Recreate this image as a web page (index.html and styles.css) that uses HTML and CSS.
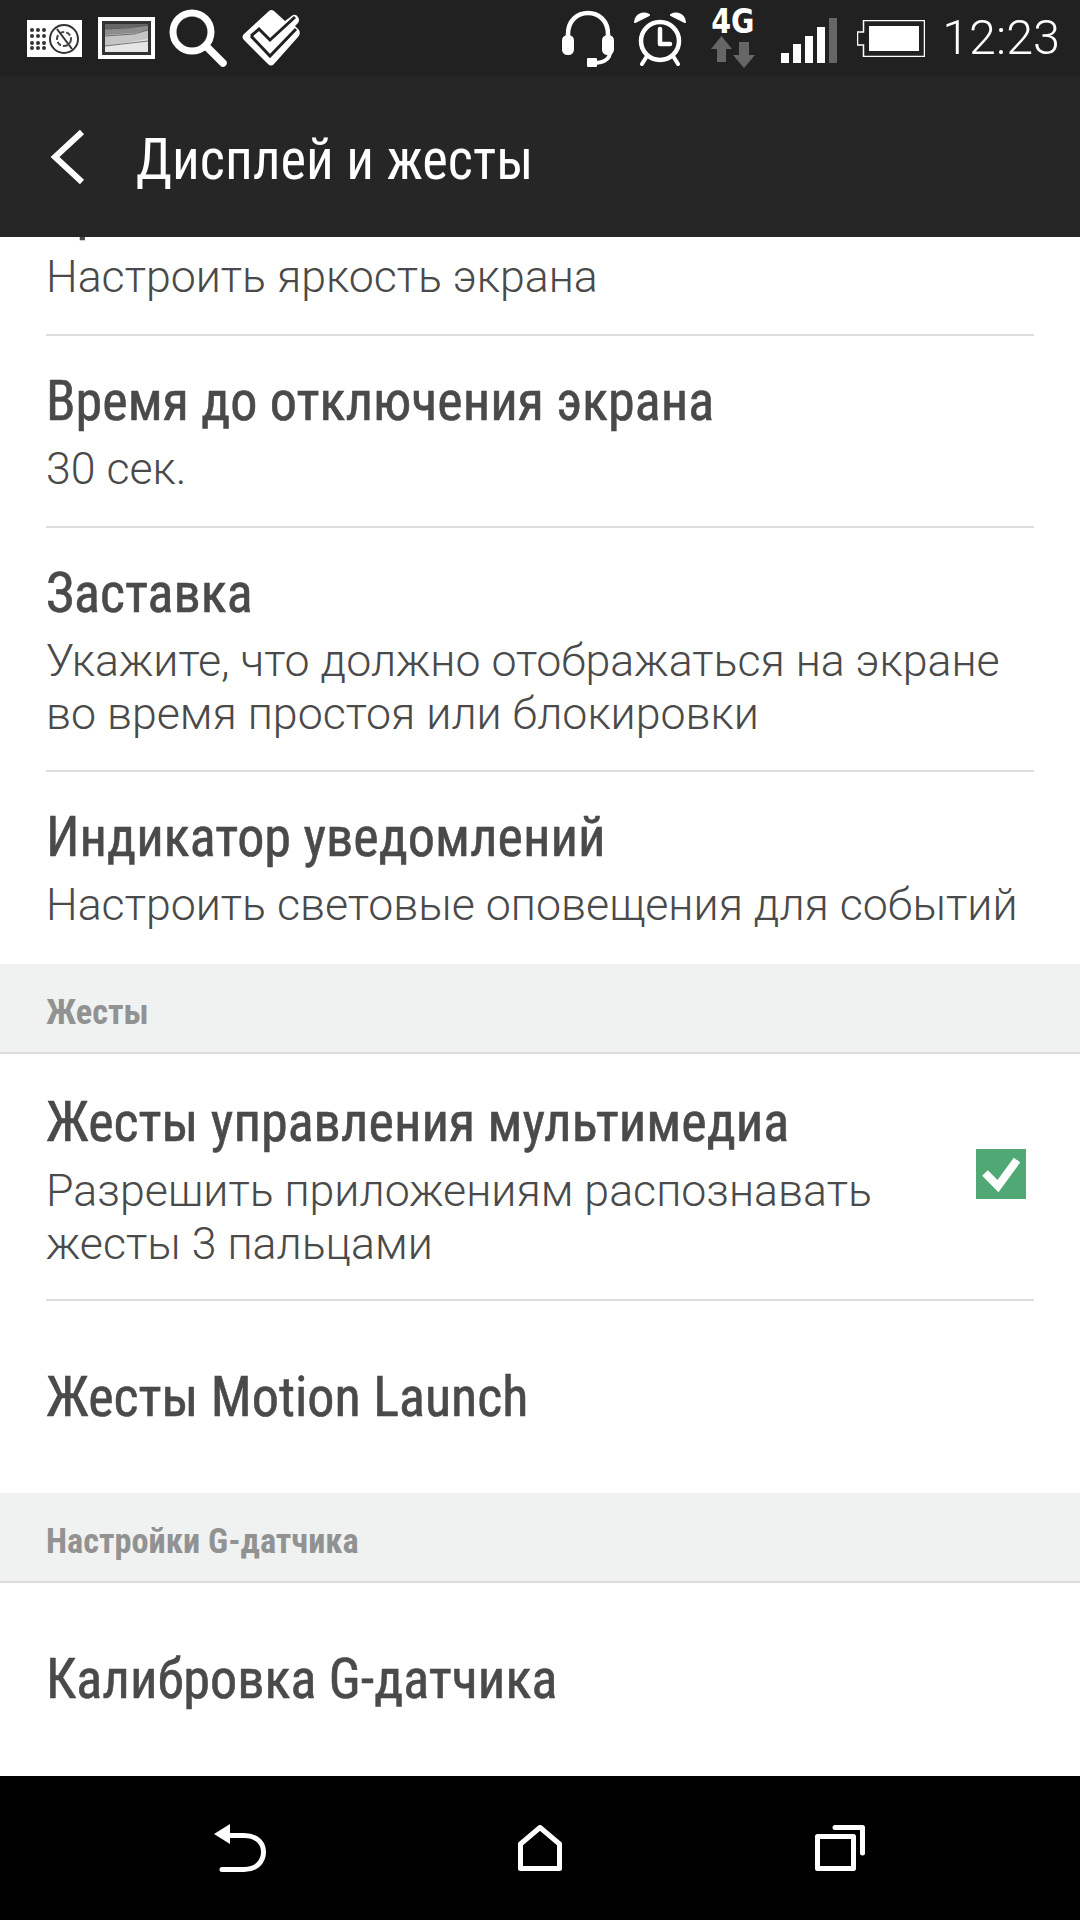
FILE: index.html
```html
<!DOCTYPE html>
<html lang="ru">
<head>
<meta charset="utf-8">
<title>Дисплей и жесты</title>
<link rel="stylesheet" href="styles.css">
</head>
<body>
<div class="phone">
  <header class="status">
    <div class="status-group left">
      <svg class="i-compass" viewBox="0 0 55 37"><rect width="55" height="37" fill="#fff"/><g fill="#333"><circle cx="5" cy="10" r="2"/><circle cx="11" cy="10" r="2"/><circle cx="17" cy="10" r="2"/><circle cx="5" cy="16" r="2"/><circle cx="11" cy="16" r="2"/><circle cx="17" cy="16" r="2"/><circle cx="5" cy="23" r="2"/><circle cx="11" cy="23" r="2"/><circle cx="17" cy="23" r="2"/><circle cx="5" cy="28" r="2"/><circle cx="11" cy="28" r="2"/><circle cx="17" cy="28" r="2"/></g><circle cx="37" cy="19" r="14" fill="none" stroke="#333" stroke-width="2"/><circle cx="37" cy="19" r="7" fill="none" stroke="#444" stroke-width="2" stroke-dasharray="5 2"/><path d="M30 9L45 29" stroke="#333" stroke-width="2"/></svg>
      <svg class="i-photo" viewBox="0 0 57 42"><rect width="57" height="42" fill="#fff"/><rect x="4" y="4" width="49" height="34" fill="#333"/><rect x="7" y="7" width="43" height="28" fill="#e6e6e6"/><path d="M7 7H50V22L7 29Z" fill="#c4c4c4"/><path d="M7 7H50V13L36 16L7 18Z" fill="#8c8c8c"/><path d="M7 7H50V9L7 12Z" fill="#666"/><path d="M7 29L50 24M7 19L36 17L50 13M7 12L30 11L50 8" fill="none" stroke="#555" stroke-width=".8"/></svg>
      <svg class="i-search" viewBox="0 0 58 58"><circle cx="23" cy="23" r="19" fill="none" stroke="#fff" stroke-width="7"/><path d="M37 37L54 54" stroke="#fff" stroke-width="7.5" stroke-linecap="round"/></svg>
      <svg class="i-check" viewBox="0 0 60 58"><path d="M3 25L28 2Q30 0 33 2L44 12L52 6Q55 5 57 8Q59 11 57 14L54 17L58 21Q60 25 57 28L33 55Q30 58 27 55L3 31Q0 28 3 25Z" fill="#fff"/><path d="M10 27L29 47L55 20" fill="none" stroke="#212121" stroke-width="3"/><path d="M10 27L18 20L29 31L54 8" fill="none" stroke="#212121" stroke-width="3"/></svg>
    </div>
    <div class="status-group right">
      <svg class="i-headset" viewBox="0 0 52 57"><path d="M6 28V24C6 11 15 3 26 3S46 11 46 24V28" fill="none" stroke="#fff" stroke-width="4.5"/><rect x="0" y="25" width="12" height="20" rx="5.500" fill="#fff"/><rect x="40" y="25" width="12" height="20" rx="5.500" fill="#fff"/><path d="M48 42C48 50 40 53 31 53" fill="none" stroke="#fff" stroke-width="4"/><rect x="25" y="48" width="10" height="9" rx="1" fill="#fff"/></svg>
      <svg class="i-alarm" viewBox="0 0 54 56"><circle cx="27" cy="31" r="19" fill="none" stroke="#fff" stroke-width="4.5"/><path d="M2 12C3 4 10 2 16 5Z" fill="#fff" stroke="#fff" stroke-width="2" stroke-linejoin="round"/><path d="M52 12C51 4 44 2 38 5Z" fill="#fff" stroke="#fff" stroke-width="2" stroke-linejoin="round"/><path d="M27 19V34H37" fill="none" stroke="#fff" stroke-width="4.5" stroke-linecap="round" stroke-linejoin="round"/><path d="M14 46L9 54M40 46L45 54" stroke="#fff" stroke-width="4" stroke-linecap="round"/></svg>
      <div class="net">
        <span class="net-label">4G</span>
        <svg class="i-arrows" viewBox="0 0 44 32"><path d="M10.500 0L21 13H15V26H6V13H0Z" fill="#666"/><path d="M33 32L44 19H38V6H28V19H22Z" fill="#666"/></svg>
      </div>
      <svg class="i-signal" viewBox="0 0 56 45"><rect y="35" width="8" height="10" fill="#fff"/><rect x="12" y="26" width="8" height="19" fill="#fff"/><rect x="24" y="18" width="8" height="27" fill="#fff"/><rect x="36" y="9" width="8" height="36" fill="#fff"/><rect x="48" width="8" height="45" fill="#666"/></svg>
      <svg class="i-battery" viewBox="0 0 68 37"><path d="M6.500 12V.500H67.500V36.500H6.500V25H.500V12Z" fill="none" stroke="#fff" stroke-width="1.500"/><rect x="12" y="6" width="50" height="25" fill="#fff"/></svg>
      <span class="time">12:23</span>
    </div>
  </header>

  <div class="actionbar">
    <svg class="i-back" viewBox="0 0 36 56"><path d="M33 3L6 28L33 53" fill="none" stroke="#fff" stroke-width="6"/></svg>
    <h1 class="screen-title">Дисплей и жесты</h1>
  </div>

  <main class="list">
    <div class="row first">
      <div class="row-title">Яркость</div>
      <div class="row-sub">Настроить яркость экрана</div>
    </div>
    <div class="row">
      <div class="row-title">Время до отключения экрана</div>
      <div class="row-sub">30 сек.</div>
    </div>
    <div class="row tall">
      <div class="row-title">Заставка</div>
      <div class="row-sub">Укажите, что должно отображаться на экране<br>во время простоя или блокировки</div>
    </div>
    <div class="row last">
      <div class="row-title">Индикатор уведомлений</div>
      <div class="row-sub">Настроить световые оповещения для событий</div>
    </div>
    <div class="section">Жесты</div>
    <div class="row with-check">
      <div class="row-body">
        <div class="row-title">Жесты управления мультимедиа</div>
        <div class="row-sub">Разрешить приложениям распознавать<br>жесты 3 пальцами</div>
      </div>
      <svg class="checkbox" viewBox="0 0 50 50"><rect width="50" height="50" fill="#50a874"/><path d="M9 24L22 37L41 11" fill="none" stroke="#fff" stroke-width="8"/></svg>
    </div>
    <div class="row single last">
      <div class="row-title">Жесты Motion Launch</div>
    </div>
    <div class="section">Настройки G-датчика</div>
    <div class="row single last">
      <div class="row-title">Калибровка G-датчика</div>
    </div>
  </main>

  <nav class="navbar">
    <svg class="i-nav-back" viewBox="0 0 52 48"><path d="M0 10L16 0V20Z" fill="#fff"/><path d="M14 11.500H30C44 11.500 49.500 20 49.500 28S44 45.500 30 45.500H8" fill="none" stroke="#fff" stroke-width="5" stroke-linecap="round"/></svg>
    <svg class="i-nav-home" viewBox="0 0 44 46"><path d="M2.500 19L22 2.500L41.500 19V43.500H2.500Z" fill="none" stroke="#fff" stroke-width="5" stroke-linejoin="round"/></svg>
    <svg class="i-nav-recent" viewBox="0 0 50 46"><rect x="2.500" y="11.500" width="36" height="32" fill="none" stroke="#fff" stroke-width="5" stroke-linejoin="round"/><path d="M20 2.500H47.500V28" fill="none" stroke="#fff" stroke-width="5" stroke-linecap="round" stroke-linejoin="round"/></svg>
  </nav>
</div>
</body>
</html>
```

FILE: styles.css
```css
* { box-sizing: border-box; }
html, body { margin: 0; padding: 0; }
body { background: #fff; font-family: Roboto, "Noto Sans", sans-serif; }
.phone { width: 1080px; height: 1920px; display: flex; flex-direction: column; overflow: hidden; }

.status { height: 76px; flex: none; background: #212121; display: flex; justify-content: space-between; align-items: center; color: #fff; }
.status-group { display: flex; align-items: center; }
.left { padding-left: 27px; }
.right { padding-right: 20px; }
.i-compass { width: 55px; height: 37px; margin-right: 16px; }
.i-photo { width: 57px; height: 42px; margin-right: 14px; }
.i-search { width: 58px; height: 58px; margin-right: 14px; }
.i-check { width: 60px; height: 58px; }
.i-headset { width: 52px; height: 57px; margin-right: 19px; }
.i-alarm { width: 54px; height: 56px; margin-right: 24px; }
.net { width: 44px; margin-right: 26px; display: flex; flex-direction: column; align-items: center; }
.net-label { font-family: "DejaVu Sans", sans-serif; font-weight: 700; font-size: 34px; line-height: 26px; transform: scaleX(.84); white-space: nowrap; }
.i-arrows { width: 44px; height: 32px; margin-top: 2px; }
.i-signal { width: 56px; height: 45px; margin-right: 20px; margin-top: 4px; }
.i-battery { width: 68px; height: 37px; margin-right: 17px; }
.time { font-weight: 300; font-size: 48.500px; line-height: 76px; }

.actionbar { height: 161px; flex: none; background: #262626; display: flex; align-items: center; padding-left: 49px; position: relative; z-index: 1; }
.i-back { width: 36px; height: 56px; margin-right: 51px; }
.screen-title { margin: 0; padding-top: 4px; color: #fff; font-weight: 400; font-size: 58px; font-stretch: 75%; line-height: 1; white-space: nowrap; transform: scaleX(.94); transform-origin: left; }

.list { flex: 1; overflow: hidden; }
.row { margin: 0 46px; padding-top: 31px; border-bottom: 2px solid #dcdcdc; height: 192px; color: #4a4a4a; }
.row.first { margin-top: -94px; height: 193px; padding-top: 33px; }
.row.first .row-sub { margin-top: 7px; }
.row.tall { height: 244px; }
.row.last { border-bottom: 0; }
.row-title { font-size: 56px; font-stretch: 75%; line-height: 68px; font-weight: 400; -webkit-text-stroke: .6px #4a4a4a; white-space: nowrap; transform: scaleX(.967); transform-origin: left; }
.row-sub { font-size: 44.700px; line-height: 53px; font-weight: 300; white-space: nowrap; margin-top: 8px; }
.with-check { height: 247px; display: flex; justify-content: space-between; padding-top: 34px; }
.with-check .row-sub { margin-top: 9px; }
.checkbox { width: 50px; height: 50px; margin: 61px 8px 0 0; flex: none; }
.row.single { display: flex; align-items: center; padding-top: 0; }

.section { height: 90px; background: #f0f2f1; border-bottom: 2px solid #dcdcdc; padding: 26px 0 0 46px; color: #929292; font-size: 34.300px; font-stretch: 75%; line-height: 44px; font-weight: 700; white-space: nowrap; }

.navbar { height: 144px; flex: none; background: #000; display: flex; align-items: center; padding: 0 0 0 214px; }
.i-nav-back { width: 52px; height: 48px; margin-right: 252px; }
.i-nav-home { width: 44px; height: 46px; margin-right: 253px; }
.i-nav-recent { width: 50px; height: 46px; }
```
